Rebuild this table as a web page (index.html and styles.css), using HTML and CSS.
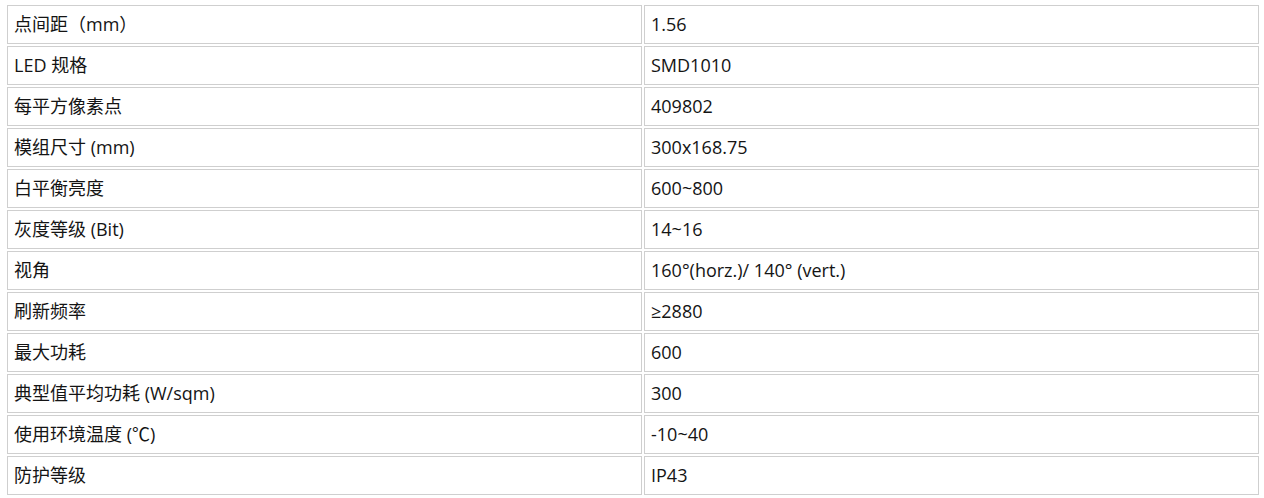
FILE: index.html
```html
<!DOCTYPE html>
<html lang="zh">
<head>
<meta charset="utf-8">
<link rel="stylesheet" href="styles.css">
</head>
<body>
<table class="spec">
  <tbody>
    <tr><td class="k">点间距（mm）</td><td class="v">1.56</td></tr>
    <tr><td class="k">LED 规格</td><td class="v">SMD1010</td></tr>
    <tr><td class="k">每平方像素点</td><td class="v">409802</td></tr>
    <tr><td class="k">模组尺寸 (mm)</td><td class="v">300x168.75</td></tr>
    <tr><td class="k">白平衡亮度</td><td class="v">600~800</td></tr>
    <tr><td class="k">灰度等级 (Bit)</td><td class="v">14~16</td></tr>
    <tr><td class="k">视角</td><td class="v">160°(horz.)/ 140° (vert.)</td></tr>
    <tr><td class="k">刷新频率</td><td class="v">≥2880</td></tr>
    <tr><td class="k">最大功耗</td><td class="v">600</td></tr>
    <tr><td class="k">典型值平均功耗 (W/sqm)</td><td class="v">300</td></tr>
    <tr><td class="k">使用环境温度 (℃)</td><td class="v">-10~40</td></tr>
    <tr><td class="k">防护等级</td><td class="v">IP43</td></tr>
  </tbody>
</table>
</body>
</html>
```
FILE: styles.css
```css
html, body {
  margin: 0;
  padding: 0;
  background: #fff;
}
body {
  font-family: "Open Sans", "Noto Sans CJK SC", sans-serif;
  font-size: 18px;
  color: #141414;
}
.spec {
  border-collapse: separate;
  border-spacing: 2px;
  margin: 3px 0 0 5px;
  width: 1256px;
  table-layout: fixed;
}
.spec td {
  border: 1px solid #cfcfcf;
  height: 39px;
  padding: 0 6px;
  box-sizing: border-box;
  vertical-align: middle;
  line-height: 20px;
  white-space: nowrap;
}
.spec td.k {
  width: 635px;
  padding-bottom: 1px;
}
.spec td.v {
  padding-bottom: 1px;
  padding-left: 6px;
}
```
